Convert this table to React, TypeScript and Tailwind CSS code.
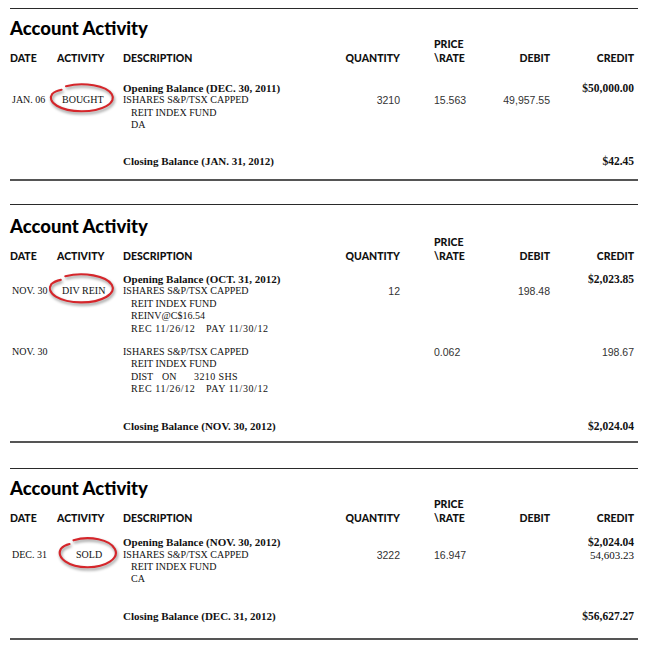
import React from "react"

type Mark = {
  label: string
  // where the label sits inside the activity column
  labelClass: string
  rx: number
  ry: number
  // svg placement relative to the label
  svgClass: string
}

type Line = string | React.ReactNode

type Entry = {
  date: string
  mark?: Mark
  lines: Line[]
  qty?: string
  price?: string
  debit?: string
  credit?: string
  creditSerif?: boolean
}

type Section = {
  top: string
  titleTop: string
  headerGap: string
  entryGap: string
  closeGap: string
  endGap: string
  opening: string
  openingCredit: string
  entries: Entry[]
  closing: string
  closingCredit: string
}

const recLine = (
  <span className="flex tracking-[0.6px]">
    <span className="w-[75px]">REC 11/26/12</span>
    <span>PAY 11/30/12</span>
  </span>
)

const sections: Section[] = [
  {
    top: "",
    titleTop: "mt-[10px]",
    headerGap: "mt-[17px]",
    entryGap: "mt-[12px]",
    closeGap: "mt-[23px]",
    endGap: "h-[12px]",
    opening: "Opening Balance (DEC. 30, 2011)",
    openingCredit: "$50,000.00",
    entries: [
      {
        date: "JAN. 06",
        mark: {
          label: "BOUGHT",
          labelClass: "pl-[5px]",
          rx: 31,
          ry: 13.5,
          svgClass: "left-[-16px] top-[-13px]"
        },
        lines: ["ISHARES S&P/TSX CAPPED", "REIT INDEX FUND", "DA"],
        qty: "3210",
        price: "15.563",
        debit: "49,957.55"
      }
    ],
    closing: "Closing Balance (JAN. 31, 2012)",
    closingCredit: "$42.45"
  },
  {
    top: "",
    titleTop: "mt-[12px]",
    headerGap: "mt-[10px]",
    entryGap: "mt-[11px]",
    closeGap: "mt-[24px]",
    endGap: "h-[9px]",
    opening: "Opening Balance (OCT. 31, 2012)",
    openingCredit: "$2,023.85",
    entries: [
      {
        date: "NOV. 30",
        mark: {
          label: "DIV REIN",
          labelClass: "pl-[5px]",
          rx: 31.5,
          ry: 14,
          svgClass: "left-[-17px] top-[-14px]"
        },
        lines: ["ISHARES S&P/TSX CAPPED", "REIT INDEX FUND", "REINV@C$16.54", recLine],
        qty: "12",
        debit: "198.48"
      },
      {
        date: "NOV. 30",
        lines: [
          "ISHARES S&P/TSX CAPPED",
          "REIT INDEX FUND",
          <span className="flex">
            <span className="w-[31px]">DIST</span>
            <span className="w-[32px]">ON</span>
            <span className="tracking-[0.4px]">3210 SHS</span>
          </span>,
          recLine
        ],
        price: "0.062",
        credit: "198.67"
      }
    ],
    closing: "Closing Balance (NOV. 30, 2012)",
    closingCredit: "$2,024.04"
  },
  {
    top: "mt-[2px]",
    titleTop: "mt-[10px]",
    headerGap: "mt-[11px]",
    entryGap: "mt-[12px]",
    closeGap: "mt-[24px]",
    endGap: "h-[16px]",
    opening: "Opening Balance (NOV. 30, 2012)",
    openingCredit: "$2,024.04",
    entries: [
      {
        date: "DEC. 31",
        mark: {
          label: "SOLD",
          labelClass: "pl-[19px]",
          rx: 28,
          ry: 14.5,
          svgClass: "left-[-21px] top-[-14px]"
        },
        lines: ["ISHARES S&P/TSX CAPPED", "REIT INDEX FUND", "CA"],
        qty: "3222",
        price: "16.947",
        credit: "54,603.23",
        creditSerif: true
      }
    ],
    closing: "Closing Balance (DEC. 31, 2012)",
    closingCredit: "$56,627.27"
  }
]

const grid = "grid grid-cols-[47px_66px_207px_70px_90px_60px_84px]"
const serif = "font-['Liberation_Serif',serif] text-[10px] leading-[12.4px] text-[#111]"
const sans = "font-['Liberation_Sans',Arial,sans-serif] text-[10.5px] leading-[12.4px] text-[#333]"
const serifBold = "font-['Liberation_Serif',serif] text-[11px] leading-[12.4px] font-bold text-[#111]"
const moneyBold = "font-['Liberation_Serif',serif] text-[11.5px] leading-[12.4px] font-bold text-[#111]"
const head = "font-['Lato',sans-serif] text-[10.5px] font-black leading-[14px] text-[#111]"

// hand drawn loop, open a bit at the top left
function Loop({ rx, ry, className }: { rx: number; ry: number; className: string }) {
  const w = rx * 2 + 8
  const h = ry * 2 + 8
  const cx = w / 2
  const cy = h / 2
  const pt = (deg: number, k = 1) => {
    const a = (deg * Math.PI) / 180
    return `${(cx + rx * k * Math.cos(a)).toFixed(1)} ${(cy + ry * k * Math.sin(a)).toFixed(1)}`
  }
  const d = `M ${pt(-118, 1.03)} A ${rx} ${ry} 0 1 1 ${pt(200, 0.99)} Q ${pt(214, 1.0)} ${pt(226, 0.9)}`
  return (
    <svg
      width={w}
      height={h}
      viewBox={`0 0 ${w} ${h}`}
      className={`pointer-events-none absolute drop-shadow-[1.5px_2.5px_1.5px_rgba(0,0,0,0.45)] ${className}`}
    >
      <path d={d} fill="none" stroke="#d5262b" strokeWidth={2.1} strokeLinecap="round" />
    </svg>
  )
}

function Block({ s }: { s: Section }) {
  return (
    <section className={s.top}>
      <div className="h-px w-[628px] bg-[#2a2a2a]" />
      <h2
        className={`${s.titleTop} font-['Lato',sans-serif] text-[18.5px] font-black leading-[18px] text-black`}
      >
        Account Activity
      </h2>

      <div className={`${grid} items-end ${head}`}>
        <div>DATE</div>
        <div>ACTIVITY</div>
        <div>DESCRIPTION</div>
        <div className="text-right">QUANTITY</div>
        <div className="pl-[34px]">
          PRICE
          <br />\RATE
        </div>
        <div className="text-right">DEBIT</div>
        <div className="text-right">CREDIT</div>
      </div>

      <div className={`${grid} ${s.headerGap}`}>
        <div className={`col-span-2 col-start-3 whitespace-nowrap ${serifBold}`}>{s.opening}</div>
        <div className={`col-start-7 text-right ${moneyBold}`}>{s.openingCredit}</div>
      </div>

      {s.entries.map((e, i) => (
        <div key={i} className={`${grid} ${i > 0 ? s.entryGap : ""}`}>
          <div className={`pl-[2px] ${serif}`}>{e.date}</div>
          <div className={`whitespace-nowrap ${serif}`}>
            {e.mark && (
              <div className={e.mark.labelClass}>
                <span className="relative inline-block">
                  {e.mark.label}
                  <Loop rx={e.mark.rx} ry={e.mark.ry} className={e.mark.svgClass} />
                </span>
              </div>
            )}
          </div>
          <div className={`whitespace-nowrap ${serif}`}>
            {e.lines.map((l, j) => (
              <div key={j} className={j > 0 ? "pl-[8px]" : ""}>
                {l}
              </div>
            ))}
          </div>
          <div className={`text-right ${sans}`}>{e.qty}</div>
          <div className={`pl-[34px] ${sans}`}>{e.price}</div>
          <div className={`text-right ${sans}`}>{e.debit}</div>
          <div
            className={`text-right ${
              e.creditSerif
                ? "font-['Liberation_Serif',serif] text-[11px] leading-[12.4px] text-[#111]"
                : sans
            }`}
          >
            {e.credit}
          </div>
        </div>
      ))}

      <div className={`${grid} ${s.closeGap}`}>
        <div className={`col-span-2 col-start-3 whitespace-nowrap ${serifBold}`}>{s.closing}</div>
        <div className={`col-start-7 text-right ${moneyBold}`}>{s.closingCredit}</div>
      </div>

      <div className={s.endGap} />
      <div className="h-[2px] w-[628px] bg-[#555]" />
    </section>
  )
}

export default function App() {
  return (
    <div className="h-[651px] w-[645px] overflow-hidden bg-white pl-[10px] pt-[8px]">
      <div className="flex flex-col gap-[23px]">
        {sections.map((s, i) => (
          <Block key={i} s={s} />
        ))}
      </div>
    </div>
  )
}
